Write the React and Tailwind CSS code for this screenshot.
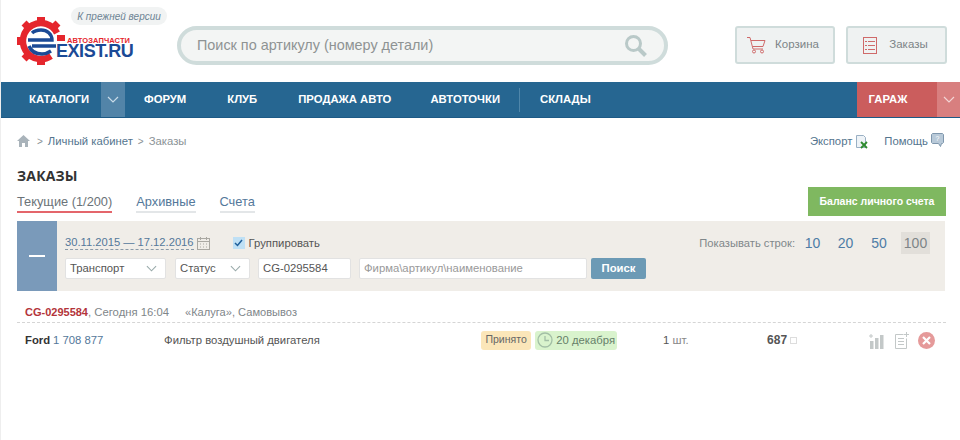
import React from "react";

const Chevron = ({ className = "", color = "#fff", w = 12 }) => (
  <svg width={w} height="7" viewBox="0 0 12 7" fill="none" className={className}>
    <path d="M1 1l5 5 5-5" stroke={color} strokeWidth="1.2" />
  </svg>
);

const Logo = () => (
  <div className="relative h-[48px] w-[120px]">
    <svg width="48" height="48" viewBox="0 0 48 48" className="absolute left-[1px] top-0">
      <path d="M40 16A18 18 0 1 0 34 39" fill="none" stroke="#e5262d" strokeWidth="6.5" />
      <g fill="#e5262d">
        <rect x="20" y="0" width="8" height="7" />
        <rect x="20" y="41" width="8" height="7" />
        <rect x="0" y="20" width="7" height="8" />
        <rect x="6" y="5" width="7" height="7" transform="rotate(45 9.5 8.5)" />
        <rect x="35" y="5" width="7" height="7" transform="rotate(45 38.5 8.5)" />
        <rect x="6" y="36" width="7" height="7" transform="rotate(45 9.5 39.5)" />
        <rect x="40" y="18" width="8" height="6" />
      </g>
      <path d="M11 23h24c0-6-5-10-11-10-4 0-7 1-9 3M15 29h24M34 34c-3 2-6 3-9 3-6 0-11-3-13-8" fill="none" stroke="#1b4a96" strokeWidth="3.4" />
    </svg>
    <div className="absolute left-[51px] top-[20px] text-[7.5px] leading-[7px] font-bold tracking-[0.1px] text-[#e5262d] font-['Liberation_Sans',sans-serif] whitespace-nowrap">АВТОЗАПЧАСТИ</div>
    <div className="absolute left-[40px] top-[27px] text-[18px] leading-[14px] font-bold text-[#1b4a96] font-['Liberation_Sans',sans-serif] tracking-[-0.45px] whitespace-nowrap">EXIST.RU</div>
  </div>
);

const Cart = () => (
  <svg width="19" height="17" viewBox="0 0 19 17" fill="none" stroke="#cf6a6a" strokeWidth="1">
    <path d="M0 .5h3l3 11.5h10" />
    <path d="M4 3.5h14l-2 6H5.5" />
    <circle cx="7" cy="14.5" r="1.5" />
    <circle cx="15" cy="14.5" r="1.5" />
  </svg>
);

const OrdersIcon = () => (
  <svg width="14" height="17" viewBox="0 0 14 17" fill="none" stroke="#cf6a6a" strokeWidth="1">
    <rect x=".5" y=".5" width="13" height="16" />
    <path d="M5 4.5h7M5 8.5h7M5 12.5h7M2 4.5h2M2 8.5h2M2 12.5h2" />
  </svg>
);

const NavItem = ({ children, className = "" }) => (
  <span className={`text-[11.3px] font-bold text-white whitespace-nowrap ${className}`}>{children}</span>
);

const Select = ({ label, width }) => (
  <div className={`flex h-[21px] items-center justify-between rounded-[2px] border border-[#e2e2e2] bg-white pl-[4px] pr-[8px] text-[11.3px] text-[#555] ${width}`}>
    <span>{label}</span>
    <Chevron color="#9aa" w={11} />
  </div>
);

export default function App() {
  return (
    <div className="h-[440px] w-[960px] overflow-hidden border-l border-[#eeeeee] bg-white font-['Liberation_Sans',Arial,sans-serif] text-[11.3px] text-[#444]">
      <header className="flex h-[82px] items-start">
        <div className="relative ml-[15px] w-[161px] pt-[17px]">
          <Logo />
          <div className="absolute left-[55px] top-[7px] flex h-[18px] w-[96px] items-center justify-center rounded-full bg-[#f1f3f3] text-[10px] italic text-[#6d8393]">К прежней версии</div>
        </div>
        <div className="mt-[26px] flex h-[39px] w-[491px] items-center justify-between rounded-full border-[4px] border-[#cfdcdb] bg-[#f3f5f4] pl-[16px] pr-[17px]">
          <span className="text-[14.4px] text-[#8e9393]">Поиск по артикулу (номеру детали)</span>
          <svg width="23" height="23" viewBox="0 0 23 23" fill="none" stroke="#b9c9c8">
            <circle cx="9.5" cy="9.5" r="7" strokeWidth="3" />
            <path d="M14.5 14.5l7 7" strokeWidth="4" />
          </svg>
        </div>
        <div className="ml-[67px] mt-[26px] flex h-[38px] w-[100px] items-center justify-center gap-[9px] rounded-[3px] border-[2px] border-[#cfdcdb] bg-[#eff2f2] pr-[4px] text-[11.5px] text-[#7c8487]">
          <Cart />
          <span>Корзина</span>
        </div>
        <div className="ml-[11px] mt-[26px] flex h-[38px] w-[101px] items-center justify-center gap-[12px] rounded-[3px] border-[2px] border-[#cfdcdb] bg-[#eff2f2] pr-[2px] text-[11.5px] text-[#7c8487]">
          <OrdersIcon />
          <span>Заказы</span>
        </div>
      </header>

      <nav className="flex h-[36px] items-stretch border-b border-[#1d5a86] bg-[#266691]">
        <div className="flex w-[100px] items-center pl-[28px]"><NavItem>КАТАЛОГИ</NavItem></div>
        <div className="flex w-[24px] items-center justify-center bg-[#5284a8]"><Chevron color="#c9dbe8" /></div>
        <div className="flex flex-1 items-center">
          <NavItem className="ml-[19px]">ФОРУМ</NavItem>
          <NavItem className="ml-[41px]">КЛУБ</NavItem>
          <NavItem className="ml-[41px]">ПРОДАЖА АВТО</NavItem>
          <NavItem className="ml-[39px]">АВТОТОЧКИ</NavItem>
          <span className="ml-[19px] h-[24px] w-px bg-[#4f86aa]" />
          <NavItem className="ml-[20px]">СКЛАДЫ</NavItem>
        </div>
        <div className="flex w-[80px] items-center justify-center bg-[#cb5d5d] pr-[18px]"><NavItem>ГАРАЖ</NavItem></div>
        <div className="flex w-[23px] items-center justify-center bg-[#d87f7f]"><Chevron color="#f3d5d5" /></div>
      </nav>

      <div className="flex h-[50px] items-center justify-between pb-[3px] pl-[16px] pr-[16px]">
        <div className="flex items-center text-[#8a9296]">
          <svg width="13" height="12" viewBox="0 0 13 12" fill="#a9b3ba" className="mb-[2px]">
            <path d="M6.5 0L0 6h2v6h3V8h3v4h3V6h2z" />
          </svg>
          <span className="ml-[7px] text-[10px]">&gt;</span>
          <span className="ml-[5px] text-[#54758e]">Личный кабинет</span>
          <span className="ml-[5px] text-[10px]">&gt;</span>
          <span className="ml-[5px]">Заказы</span>
        </div>
        <div className="flex items-center text-[#54758e]">
          <span>Экспорт</span>
          <svg width="12" height="14" viewBox="0 0 12 14" className="ml-[4px]">
            <path d="M.5.5h7l2 2v10h-9z" fill="#eef3f7" stroke="#9ab0c4" />
            <path d="M5 7l6 6M11 7l-6 6" stroke="#2e8b2e" strokeWidth="1.8" />
          </svg>
          <span className="ml-[16px]">Помощь</span>
          <svg width="13" height="14" viewBox="0 0 13 14" className="mb-[4px] ml-[3px]">
            <path d="M1.5.5h10l1 1v8l-1 1h-1l-1 3-2-3h-6l-1-1v-8z" fill="#b8c9d8" stroke="#7f97ad" />
            <text x="6.5" y="8" fontSize="7" textAnchor="middle" fill="#fff">?</text>
          </svg>
        </div>
      </div>

      <div className="pl-[16px] pr-[14px]">
        <div className="flex items-end justify-between">
          <div className="pb-[3px]">
            <h1 className="font-['Open_Sans',sans-serif] text-[14px] leading-[16px] font-bold tracking-[0.2px] text-[#333]">ЗАКАЗЫ</h1>
            <div className="mt-[10px] flex gap-[24px] text-[12.8px] leading-[16px]">
              <span className="border-b-[2px] border-[#e4656b] pb-[1px] text-[#6b7378]">Текущие (1/200)</span>
              <span className="border-b-[2px] border-[#e3e6e8] pb-[1px] text-[#54789a]">Архивные</span>
              <span className="border-b-[2px] border-[#e3e6e8] pb-[1px] text-[#54789a]">Счета</span>
            </div>
          </div>
          <div className="flex h-[29px] w-[138px] items-center justify-center bg-[#7fb860] text-[10.5px] font-bold text-white">Баланс личного счета</div>
        </div>

        <section className="mt-[5px] flex h-[70px] w-[928px] bg-[#f0ede8]">
          <div className="flex w-[40px] items-center justify-center bg-[#7a9aba]">
            <span className="h-[2px] w-[16px] bg-white" />
          </div>
          <div className="flex flex-1 flex-col pl-[8px] pt-[12px]">
            <div className="flex h-[20px] items-center">
              <span className="border-b border-dashed border-[#8b9aa8] text-[11.2px] leading-[13px] text-[#54789a]">30.11.2015 — 17.12.2016</span>
              <svg width="13" height="13" viewBox="0 0 13 13" fill="none" stroke="#aaa8a2" className="ml-[3px]">
                <rect x=".5" y="1.5" width="12" height="11" />
                <path d="M.5 4.5h12M3.5 0v3M9.5 0v3M3 7h1M6 7h1M9 7h1M3 10h1M6 10h1M9 10h1" />
              </svg>
              <span className="ml-[23px] flex h-[12px] w-[12px] items-center justify-center bg-[#bfe0f5]">
                <svg width="9" height="8" viewBox="0 0 9 8" fill="none" stroke="#1f5f9a" strokeWidth="1.5"><path d="M1 4l2.5 2.5L8 1" /></svg>
              </span>
              <span className="ml-[4px] text-[#555]">Группировать</span>
              <div className="ml-auto mr-[15px] flex items-center">
                <span className="mr-[1px] text-[11.2px] text-[#80878a]">Показывать строк:</span>
                <span className="w-[33px] text-center text-[14px] text-[#4e7ca6]">10</span>
                <span className="w-[33px] text-center text-[14px] text-[#4e7ca6]">20</span>
                <span className="w-[34px] text-center text-[14px] text-[#4e7ca6]">50</span>
                <span className="ml-[5px] flex h-[22px] w-[29px] items-center justify-center bg-[#e2dfda] text-[14px] text-[#7d8488]">100</span>
              </div>
            </div>
            <div className="mt-[5px] flex">
              <Select label="Транспорт" width="w-[101px]" />
              <div className="ml-[9px]"><Select label="Статус" width="w-[75px]" /></div>
              <div className="ml-[8px] flex h-[21px] w-[93px] items-center rounded-[2px] border border-[#e2e2e2] bg-white pl-[4px] text-[#555]">CG-0295584</div>
              <div className="ml-[8px] flex h-[21px] w-[228px] items-center rounded-[2px] border border-[#e2e2e2] bg-white pl-[4px] text-[#999]">Фирма\артикул\наименование</div>
              <div className="ml-[4px] flex h-[21px] w-[55px] items-center justify-center rounded-[2px] bg-[#6c9ab5] font-bold text-white">Поиск</div>
            </div>
          </div>
        </section>

        <div className="mt-[13px] flex h-[19px] items-center border-b border-dashed border-[#d5d5d5] pb-[2px] pl-[8px] text-[#80868a]">
          <span className="text-[11px] font-bold text-[#b3343a]">CG-0295584</span>
          <span>, Сегодня 16:04</span>
          <span className="ml-[16px] text-[11.1px]">«Калуга», Самовывоз</span>
        </div>

        <div className="flex h-[34px] items-center pl-[8px]">
          <span className="font-bold text-[#333]">Ford</span>
          <span className="ml-[3px] w-[111px] text-[#54789a]">1 708 877</span>
          <span className="w-[317px] text-[#555]">Фильтр воздушный двигателя</span>
          <span className="flex h-[19px] w-[50px] items-center justify-center rounded-[3px] bg-[#fbe6b9] text-[10.5px] text-[#666]">Принято</span>
          <span className="ml-[4px] flex h-[19px] w-[82px] items-center justify-center gap-[3px] rounded-[3px] bg-[#d9f3cd] text-[#66806a]">
            <svg width="16" height="16" viewBox="0 0 16 16" fill="none" stroke="#a3bfa6" strokeWidth="1.3"><circle cx="8" cy="8" r="7" /><path d="M8 4v4.5h4" /></svg>
            20 декабря
          </span>
          <span className="ml-[46px] w-[104px] text-[#555]">1 <span className="text-[#888]">шт.</span></span>
          <span className="text-[12px] font-bold text-[#555]">687</span>
          <span className="ml-[3px] h-[7px] w-[7px] border border-[#ddd]" />
          <svg width="15" height="17" viewBox="0 0 15 17" fill="#c3c8c8" className="ml-[72px]">
            <rect x="1" y="9" width="3.5" height="8" />
            <rect x="6" y="6" width="3.5" height="11" />
            <rect x="11" y="3" width="3.5" height="14" />
            <path d="M2 2v4M0 4h4" stroke="#c3c8c8" fill="none" />
          </svg>
          <svg width="15" height="17" viewBox="0 0 15 17" fill="none" stroke="#c3c8c8" className="ml-[10px]">
            <path d="M9.5 2.5h-8v14h11v-10" />
            <path d="M4 6.5h6M4 9.5h6M4 12.5h6M12.5 0v5M10 2.5h5" />
          </svg>
          <span className="ml-[9px] flex h-[17px] w-[17px] items-center justify-center rounded-full bg-[#e59a9a]">
            <svg width="9" height="9" viewBox="0 0 9 9" stroke="#fff" strokeWidth="2.2"><path d="M1 1l7 7M8 1l-7 7" /></svg>
          </span>
        </div>
      </div>
    </div>
  );
}
